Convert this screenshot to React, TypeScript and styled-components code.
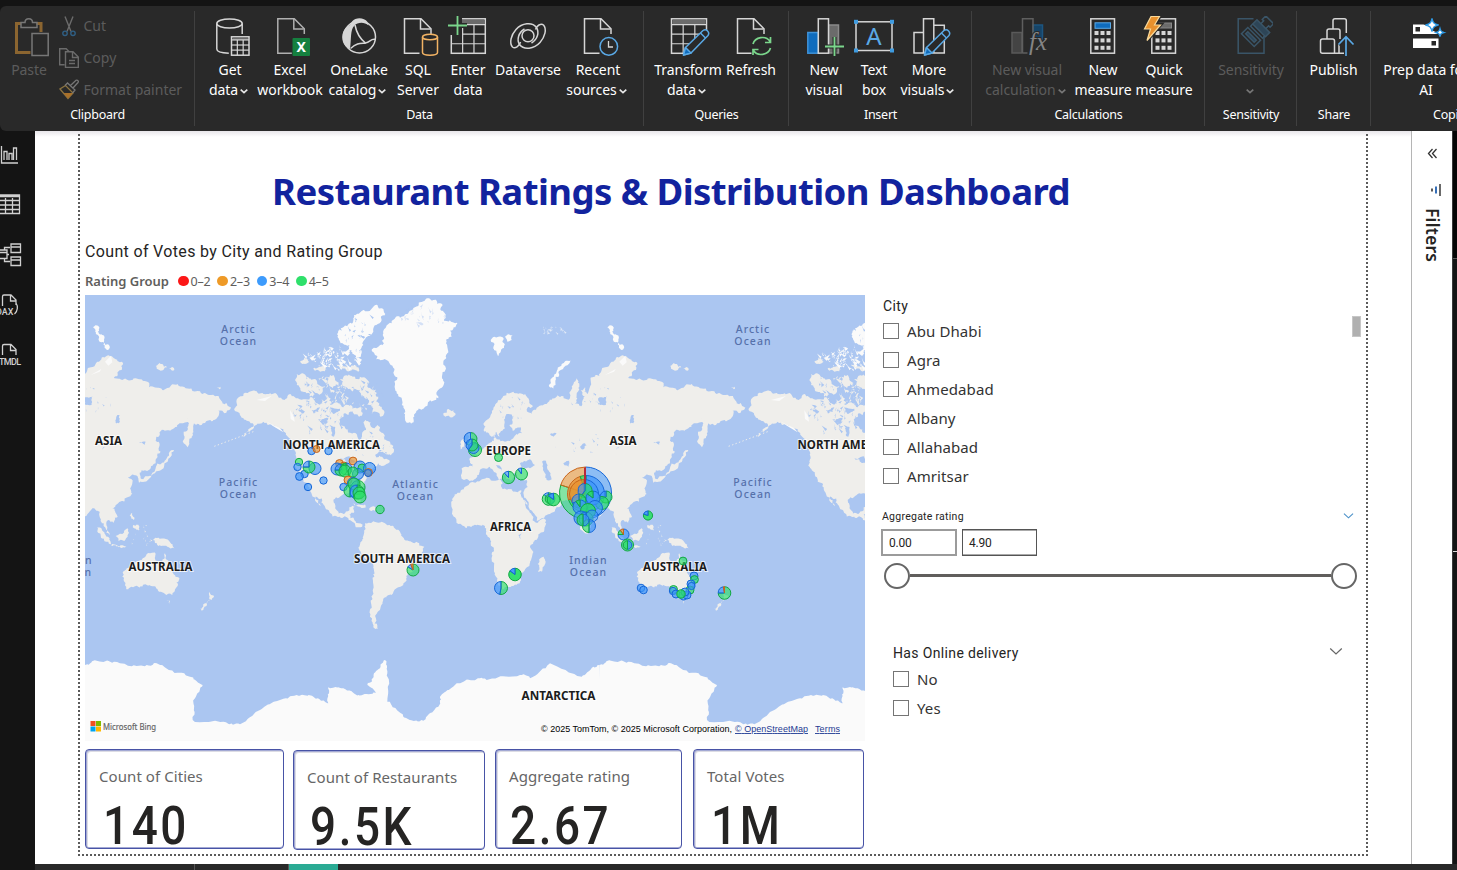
import React from "react";
import styled, { createGlobalStyle, css } from "styled-components";

const ui = `"Noto Sans", "Open Sans", sans-serif`;
const din = `Roboto, "Noto Sans", sans-serif`;

const GlobalStyle = createGlobalStyle`
  *, *::before, *::after { box-sizing: border-box; }
  body { margin: 0; font-family: ${ui}; background: #141414; overflow: hidden; }
  svg { display: block; flex: none; }
`;

/* ---------- shell ---------- */

const Page = styled.div`
  width: 1457px;
  height: 870px;
  display: flex;
  flex-direction: column;
  overflow: hidden;
  background: #141414;
`;

const Ribbon = styled.header`
  margin-top: 6px;
  height: 125px;
  flex: none;
  display: flex;
  background: #292929;
  border-radius: 6px 0 0 6px;
  color: #fff;
`;

const Group = styled.section<{ $w: number; $last?: boolean }>`
  width: ${(p) => p.$w}px;
  flex: none;
  display: flex;
  flex-direction: column;
  align-items: center;
  position: relative;
  ${(p) =>
    !p.$last &&
    css`
      &::after {
        content: "";
        position: absolute;
        right: 0;
        top: 5px;
        bottom: 5px;
        width: 1px;
        background: #404040;
      }
    `}
`;

const Items = styled.div<{ $pad?: number }>`
  height: 99px;
  width: 100%;
  display: flex;
  padding-left: ${(p) => p.$pad ?? 0}px;
`;

const Item = styled.div<{ $w: number; $dim?: boolean }>`
  width: ${(p) => p.$w}px;
  flex: none;
  padding-top: 10px;
  display: flex;
  flex-direction: column;
  align-items: center;
  font-size: 14px;
  line-height: 20px;
  letter-spacing: -0.05px;
  white-space: nowrap;
  color: ${(p) => (p.$dim ? "#5c5c5c" : "#fff")};
  svg.art { margin-bottom: 2px; }
`;

const Line = styled.span<{ $chev?: boolean }>`
  display: flex;
  align-items: center;
  gap: 2px;
  height: 20px;
  padding-right: ${(p) => (p.$chev ? 3 : 0)}px;
  svg { margin-top: 2px; }
`;

const GroupName = styled.div`
  font-size: 12.5px;
  line-height: 20px;
  letter-spacing: -0.25px;
  white-space: nowrap;
`;

const ClipList = styled.div`
  display: flex;
  flex-direction: column;
  padding: 4px 0 0 1px;
`;

const ClipRow = styled.div`
  height: 32.8px;
  display: flex;
  align-items: center;
  gap: 4.5px;
  font-size: 14px;
  color: #5c5c5c;
  white-space: nowrap;
`;

const Body = styled.div`
  height: 733px;
  flex: none;
  display: flex;
`;

const Nav = styled.nav`
  width: 35px;
  flex: none;
  background: #141414;
`;

const Canvas = styled.main`
  width: 1376px;
  flex: none;
  background: linear-gradient(#e8e6ea, #fff 6px);
  padding-left: 43px;
`;

const Board = styled.div`
  width: 1290px;
  height: 725px;
  padding: 38px 0 0 7px;
  background:
    repeating-linear-gradient(#5a5a5a 0 2px, transparent 2px 4px) 0 3px / 2px 100% no-repeat,
    repeating-linear-gradient(#5a5a5a 0 2px, transparent 2px 4px) 100% 3px / 2px 100% no-repeat,
    repeating-linear-gradient(90deg, #5a5a5a 0 2px, transparent 2px 4px) 0 100% / 100% 2px no-repeat;
`;

const Title = styled.h1`
  margin: 0 0 0 187px;
  font-size: 36.5px;
  line-height: 44px;
  font-weight: 700;
  color: #12239e;
  letter-spacing: -0.55px;
  white-space: nowrap;
`;

const Columns = styled.div`
  display: flex;
  gap: 16px;
  margin-top: 28px;
`;

const MapColumn = styled.div`
  width: 780px;
  flex: none;
`;

const VisualTitle = styled.div`
  font-family: ${din};
  font-size: 16px;
  line-height: 20px;
  padding-top: 1px;
  letter-spacing: 0.34px;
  color: #252423;
  white-space: nowrap;
`;

const Legend = styled.div`
  display: flex;
  align-items: center;
  height: 20px;
  margin: 9px 0 4px;
  font-size: 12.5px;
  color: #605e5c;
  white-space: nowrap;
`;

const LegendName = styled.b`
  width: 93px;
  font-size: 13px;
  font-weight: 600;
`;

const LegendItem = styled.span<{ $c: string }>`
  display: flex;
  align-items: center;
  gap: 2px;
  width: 39.4px;
  letter-spacing: -0.2px;
  &::before {
    content: "";
    width: 10.5px;
    height: 10.5px;
    border-radius: 50%;
    background: ${(p) => p.$c};
  }
`;

const Cards = styled.div`
  display: flex;
  align-items: flex-start;
  margin-top: 8px;
`;

const Card = styled.div<{ $w: number; $gap: number; $drop?: boolean }>`
  width: ${(p) => p.$w}px;
  height: 100px;
  flex: none;
  margin: ${(p) => (p.$drop ? 1 : 0)}px ${(p) => p.$gap}px 0 0;
  padding: 16px 0 0 13px;
  border: 1px solid #4853a6;
  box-shadow: inset 1px 1px #a3a9d4, inset 0 -1px #a3a9d4, inset 2px 2px #dcdce4;
  border-radius: 4px;
  overflow: hidden;
`;

const CardLabel = styled.div`
  font-size: 15px;
  line-height: 20px;
  letter-spacing: 0.07px;
  color: #666;
  white-space: nowrap;
`;

const CardValue = styled.div<{ $x?: number }>`
  font-family: ${din};
  font-size: 54px;
  font-weight: 500;
  line-height: 60px;
  letter-spacing: 3px;
  margin: 10px 0 0 ${(p) => p.$x ?? 0}px;
  color: #252423;
  white-space: nowrap;
  transform: scaleX(0.85);
  transform-origin: 0 0;
`;

const SlicerColumn = styled.div`
  width: 484px;
  flex: none;
  padding-top: 55px;
`;

const SlicerTitle = styled.div<{ $small?: boolean; $x?: number }>`
  display: flex;
  justify-content: space-between;
  align-items: center;
  padding-left: ${(p) => p.$x ?? 0}px;
  font-family: ${din};
  font-size: ${(p) => (p.$small ? 10.5 : 14)}px;
  line-height: 20px;
  letter-spacing: ${(p) => (p.$small ? 0.26 : 0.36)}px;
  color: #252423;
  svg { margin-top: -3px; }
`;

const CityList = styled.div`
  display: flex;
  justify-content: space-between;
  padding: 0 8px 0 2px;
`;

const Thumb = styled.div`
  width: 9px;
  height: 21px;
  margin-right: -4px;
  background: #b0b0b0;
  border: 1px solid #c6c6c6;
`;

const Check = styled.div`
  height: 29.1px;
  display: flex;
  align-items: center;
  gap: 8px;
  font-size: 15px;
  letter-spacing: 0.1px;
  color: #333;
  &::before {
    content: "";
    width: 16px;
    height: 16px;
    border: 1px solid #757575;
  }
`;

const RangeSlicer = styled.div`
  margin-top: 16px;
  width: 473px;
`;

const Inputs = styled.div`
  display: flex;
  gap: 5px;
  margin-top: 2px;
`;

const Input = styled.div<{ $soft?: boolean }>`
  width: ${(p) => (p.$soft ? 76 : 75)}px;
  height: 27px;
  padding-left: 6px;
  border: ${(p) => (p.$soft ? "2px solid #9b9b9b" : "1px solid #555")};
  box-shadow: ${(p) => (p.$soft ? "none" : "inset 0 1px #aaa, inset 0 -1px #aaa")};
  font-family: ${din};
  font-size: 12px;
  letter-spacing: -0.2px;
  line-height: ${(p) => (p.$soft ? 24 : 26)}px;
  color: #252423;
`;

const Track = styled.div`
  display: flex;
  align-items: center;
  margin: 7px 0 0 3px;
  width: 473px;
`;

const Knob = styled.div`
  width: 26px;
  height: 26px;
  border: 2px solid #666;
  border-radius: 50%;
  background: #fff;
`;

const Rail = styled.div`
  flex: 1;
  height: 3px;
  background: #605e5c;
`;

const DeliverySlicer = styled.div`
  margin: 54px 0 0 12px;
  width: 450px;
`;

const Options = styled.div`
  padding-top: 1.5px;
`;

const Filters = styled.aside`
  width: 41px;
  flex: none;
  background: #fff;
  border-left: 1px solid #b5b5b5;
  display: flex;
  flex-direction: column;
  align-items: center;
`;

const FiltersLabel = styled.div`
  writing-mode: vertical-rl;
  font-size: 17.5px;
  line-height: 22px;
  letter-spacing: 0.15px;
  font-weight: 600;
  color: #252423;
  margin: 10px 0 0 2px;
`;

const Edge = styled.div`
  flex: 1;
  background: #141414;
  border-left: 1px solid #3a3a3a;
  display: flex;
  flex-direction: column;
  &::before { content: ""; height: 128px; border-bottom: 1px solid #555; background: #050505; }
  &::after { content: ""; height: 293px; border-bottom: 1px solid #ddd; }
`;

const Tabs = styled.footer`
  flex: 1;
  margin-left: 35px;
  display: flex;
  background: #292929;
`;

const Tab = styled.div<{ $w: number; $active?: boolean }>`
  width: ${(p) => p.$w}px;
  background: ${(p) => (p.$active ? "#2aab94" : "#292929")};
  border-right: ${(p) => (p.$active ? "none" : "1px solid #555")};
`;

/* ---------- ribbon artwork ---------- */

const Chevron = ({ c = "#e8e8e8", w = 8, sw = 1.6 }: { c?: string; w?: number; sw?: number }) => (
  <svg width={w} height={w} viewBox="0 0 8 8" fill="none" stroke={c} strokeWidth={sw}>
    <path d="M.7 2.6 4 5.7 7.3 2.6" />
  </svg>
);

/* Each drawing is placed on the shared ribbon grid, centred on column `cx`. */
const Art = ({ cx, children }: { cx: number; children: React.ReactNode }) => (
  <svg
    className="art"
    width="44"
    height="42"
    viewBox={`${cx - 22} 16 44 42`}
    fill="none"
    stroke="#d6d6d6"
    strokeWidth="1.5"
  >
    {children}
  </svg>
);

const Sheet = ({ x, cut = 15 }: { x: number; cut?: number }) => (
  <g>
    <path d={`M${x + cut} 53.2H${x}V18.8h16.5l10 10V${cut > 16 ? 36 : 34}`} />
    <path d={`M${x + 16} 19v10h10`} />
  </g>
);

const Grid = ({ x, w, y = 18.8, h = 34.5, rows = 3 }: any) => (
  <g strokeWidth="1.2">
    <rect x={x} y={y} width={w} height={h} strokeWidth="1.5" />
    <rect x={x + 1} y={y + 1} width={w - 2} height={h * 0.13} fill="#6b6b6b" stroke="none" />
    {Array.from({ length: rows }, (_, i) => (
      <path key={i} d={`M${x} ${y + h * 0.17 + (i * h * 0.83) / rows}h${w}`} />
    ))}
    <path d={`M${x + w / 3} ${y + h * 0.17}v${h * 0.83}M${x + (2 * w) / 3} ${y + h * 0.17}v${h * 0.83}`} />
  </g>
);

const Pencil = ({ x, y }: { x: number; y: number }) => (
  <g transform={`translate(${x} ${y})`} stroke="#5aa9e6" strokeWidth="1.5" strokeLinejoin="round">
    <path d="M0 0 2-7.500 19.500-24.500a3.600 3.600 0 0 1 5 5L7.500-2Z" fill="#292929" />
    <path d="M0 0 2-7.500 7.500-2Z" fill="#0f6cbd" />
    <path d="m17-22 5 5" />
  </g>
);

const PasteArt = () => (
  <Art cx={29}>
    <path d="M21 23.500h-4.500V52.500h14M36.500 23.500h4.500V32" stroke="#8b6530" strokeWidth="3" />
    <path d="M21 27.500v-5h4c0-5 7.500-5 7.500 0H37v5Z" stroke="#777" />
    <rect x="32" y="33.500" width="16.200" height="22" stroke="#777" fill="#292929" />
  </Art>
);

const GetDataArt = () => (
  <Art cx={230}>
    <ellipse cx="229.500" cy="23.500" rx="12.700" ry="4.500" />
    <path d="M216.800 23.500V49c0 2.500 5 4 12 4.200M242.200 23.500V34" />
    <g fill="#292929"><Grid x={231.5} w={17.5} y={36.8} h={18.4} /></g>
  </Art>
);

const ExcelArt = () => (
  <Art cx={290}>
    <g stroke="#b0b0b0"><Sheet x={277.800} cut={14} /></g>
    <rect x="292.500" y="38" width="17.500" height="18" rx="1" fill="#15803f" stroke="none" />
    <text x="301.200" y="52.300" textAnchor="middle" fontFamily={ui} fontWeight="700" fontSize="14" fill="#fff" stroke="none">X</text>
  </Art>
);

const OneLakeArt = () => (
  <Art cx={359}>
    <circle cx="359.500" cy="37" r="16" />
    <path d="M343 42c-2-7 0-13.500 7-17l2-3.500c4-4.500 12-4 15.500.5l1 3.500c-4-4-11-3.500-14 0-4.500 4.500-3 13-4.500 23.500-4-2-6-4-7-7Z" fill="#d6d6d6" stroke="none" />
    <path d="M355 25c1.500 8 5 14 11 18.500M350.500 48.500c7-6 10-5 15-5.500 5-1 5-4.500 10-3.500" />
  </Art>
);

const SqlArt = () => (
  <Art cx={418}>
    <Sheet x={404.5} cut={15} />
    <g stroke="#f2b364">
      <ellipse cx="430" cy="37" rx="7.500" ry="2.800" />
      <path d="M422.500 37v15.500c0 3.500 15 3.500 15 0V37" />
    </g>
  </Art>
);

const EnterArt = () => (
  <Art cx={468}>
    <Grid x={451.3} w={34} />
    <path d="M447 15h15v20h-15z" fill="#292929" stroke="none" />
    <path d="M448 25.500h19M457.500 16v19" stroke="#292929" strokeWidth="5" />
    <path d="M448 25.500h19M457.500 16v19" stroke="#7bd68c" strokeWidth="1.800" />
  </Art>
);

const DataverseArt = () => (
  <Art cx={528}>
    <circle cx="528" cy="35.800" r="6" />
    <path d="M535.500 29.500c1-4 5.500-6.500 8-4.500 3.500 4 1.500 12-3.500 17.500-6 6.500-16 8-20.500 2-3-5-1-12 5-15.500" />
    <path d="M520.500 42c-1 4.500-5.500 7-8 5-3.500-4-1.500-12 3.500-17.500 6-6.500 16-8 20.500-2 3 5 1 12-5 15.500" />
  </Art>
);

const RecentArt = () => (
  <Art cx={598}>
    <Sheet x={584.5} cut={15} />
    <circle cx="608.800" cy="46.400" r="8.800" stroke="#5aa9e6" fill="#292929" />
    <path d="M608.500 41v6h4.500" strokeWidth="1.300" />
  </Art>
);

const TransformArt = () => (
  <Art cx={688}>
    <Grid x={671.5} w={35} />
    <path d="m683 55 27-27v27Z" fill="#292929" stroke="none" />
    <Pencil x={683.5} y={55} />
  </Art>
);

const RefreshArt = () => (
  <Art cx={751}>
    <Sheet x={737.5} cut={14} />
    <g stroke="#7bd68c" strokeWidth="1.700">
      <path d="M753 44c2-7 13-9 17-2.500M770.500 37v5.500H765M770.500 48c-2 7-13 9-17 2.500M753 55v-5.500h5.500" />
    </g>
  </Art>
);

const NewVisualArt = () => (
  <Art cx={824}>
    <rect x="828.500" y="25" width="10" height="28" fill="#6b6b6b" stroke="#8a8a8a" />
    <rect x="807.800" y="32.500" width="10.500" height="20.700" fill="#0f6cbd" stroke="#3f92d8" />
    <rect x="818.300" y="18.800" width="10.200" height="34.400" fill="#292929" />
    <path d="M825 46.500h19M834.500 37v19" stroke="#292929" strokeWidth="4" />
    <path d="M825 46.500h19M834.500 37v19" stroke="#7bd68c" strokeWidth="1.800" />
  </Art>
);

const TextBoxArt = () => (
  <Art cx={874}>
    <rect x="856" y="21.800" width="36" height="28.700" />
    <g fill="#3f9be0" stroke="none">
      {[[854, 19.8], [890, 19.8], [854, 48.5], [890, 48.5]].map(([x, y]) => (
        <rect key={`${x}-${y}`} x={x} y={y} width="4" height="4" />
      ))}
    </g>
    <text x="874" y="44.800" textAnchor="middle" fontFamily={ui} fontSize="24" fill="#5aa9e6" stroke="none">A</text>
  </Art>
);

const MoreVisualsArt = () => (
  <Art cx={929}>
    <path d="M934 25.300h10.300V53H914V32.500h9.500M923.500 53V18.800h10.300V53" />
    <Pencil x={924.5} y={55} />
  </Art>
);

const VisualCalcArt = () => (
  <Art cx={1027}>
    <rect x="1012" y="32.500" width="10" height="20.500" fill="#444" stroke="#5a5a5a" />
    <rect x="1033" y="25" width="9.500" height="14" fill="#164467" stroke="#1d5580" />
    <path d="M1022.500 53V18.800H1033V36M1022.500 53h5" stroke="#5f5f5f" />
    <text x="1029" y="50" fontFamily={`"Liberation Serif", serif`} fontStyle="italic" fontSize="25" fill="#858585" stroke="#292929" strokeWidth="2" paintOrder="stroke">fx</text>
  </Art>
);

const Keys = ({ x }: { x: number }) => (
  <g fill="#d6d6d6" stroke="none">
    {[0, 1, 2].flatMap((r) =>
      [0, 1, 2].map((c) => <rect key={`${r}${c}`} x={x + c * 6} y={31 + r * 7.400} width="4" height="4" />)
    )}
  </g>
);

const MeasureArt = () => (
  <Art cx={1103}>
    <rect x="1090.800" y="18.800" width="23.700" height="34.400" />
    <rect x="1095" y="22.800" width="15.500" height="5.500" fill="#0f6cbd" stroke="#5aa9e6" strokeWidth="1" />
    <Keys x={1094.5} />
  </Art>
);

const QuickArt = () => (
  <Art cx={1164}>
    <rect x="1151.800" y="18.800" width="23.700" height="34.400" />
    <rect x="1159" y="23" width="12.500" height="5" fill="#6b6b6b" stroke="#888" strokeWidth="1" />
    <Keys x={1155.500} />
    <path d="m1151 15.500h9.500l-5 8.500h6L1146 42l3.500-12.500h-6Z" fill="#e8912d" stroke="#292929" strokeWidth="3" />
    <path d="M1151 16.500h8.500l-5 8.500h6L1147 40.500l3.500-11.500h-6Z" fill="#e8912d" stroke="#f9d99a" strokeWidth="1.200" />
  </Art>
);

const SensitivityArt = () => (
  <Art cx={1250.500}>
    <g stroke="#3a5568">
      <path d="M1253 18.800h-15.300V53.200h25.800V36" />
      <g transform="translate(1260 29) rotate(45)">
        <rect x="-9" y="-4" width="18" height="6" fill="#2d4557" />
        <path d="M-3.500-4v-4h-2v-5h11v5h-2v4" />
        <path d="M-9 2v3h17V2" />
      </g>
      <g transform="translate(1250.500 37) rotate(45)">
        <rect x="-9" y="-4.500" width="18" height="9" />
        <rect x="-6" y="-1.500" width="12" height="3" fill="#2d4557" />
      </g>
    </g>
  </Art>
);

const PublishArt = () => (
  <Art cx={1333}>
    <path d="M1332 28.500v-7.700a2 2 0 0 1 2-2h9.300a2 2 0 0 1 2 2V33M1326 39v-8a2 2 0 0 1 2-2h9a2 2 0 0 1 2 2v8M1338 53.200h-16.500a2 2 0 0 1-2-2V41a2 2 0 0 1 2-2h10a2 2 0 0 1 2 2v12M1338 43v10.200h6" />
    <path d="M1345 56V37M1337.500 44.500l7.500-7.800 7.500 7.800" stroke="#292929" strokeWidth="4" />
    <path d="M1345 56V37M1337.500 44.500l7.500-7.800 7.500 7.800" stroke="#5aa9e6" strokeWidth="1.700" />
  </Art>
);

const PrepArt = () => (
  <Art cx={1426}>
    <g stroke="none" fill="#fff">
      <rect x="1413" y="24.500" width="25.500" height="9.500" />
      <rect x="1413" y="38.500" width="25.500" height="9.500" />
      <path d="M1415.500 27h4.500v4.500h-4.500zM1431.500 41h4.500v4.500h-4.500z" fill="#292929" />
      <path d="M1432 16.500c1.500 6 2.500 7 8.500 8.500 4 .5 6 5 3.500 8-3 4-6 2-8-1-3-1-5-2-6-5-2-1.500-5-1.500-6.500-2.500 6-1.500 7-2.500 8.500-8Z" fill="#292929" />
      <path d="M1432 18.500c1 4.500 2 5.500 6.500 6.500-4.500 1-5.500 2-6.500 6.500-1-4.500-2-5.500-6.500-6.500 4.500-1 5.500-2 6.500-6.500ZM1440 28.500c.7 2.700 1.200 3.200 4 4-2.800.7-3.300 1.200-4 4-.7-2.800-1.200-3.300-4-4 2.800-.8 3.300-1.300 4-4Z" stroke="#2c9be8" strokeWidth="1.300" />
    </g>
  </Art>
);

const CutArt = () => (
  <svg width="20" height="22" viewBox="59 15 20 22" fill="none" stroke="#6b6b6b" strokeWidth="1.400">
    <path d="m65 16.500 6 15M73 16.500l-6 15" />
    <circle cx="65" cy="33.300" r="2.200" stroke="#2f5f84" />
    <circle cx="73" cy="33.300" r="2.200" stroke="#2f5f84" />
  </svg>
);

const CopyArt = () => (
  <svg width="20" height="22" viewBox="59 47 20 22" fill="none" stroke="#6b6b6b" strokeWidth="1.400">
    <path d="M64.500 64.800h-4.800V48.700h6.500l3 3M65.500 51.800h7.500l5.300 5.300v10.300H65.500ZM72.500 52v5.500H78M69 60.500h6M69 63.500h6" />
  </svg>
);

const PainterArt = () => (
  <svg width="20" height="22" viewBox="59 79 20 22" fill="none" stroke="#777" strokeWidth="1.300">
    <path d="m60 90 8 9.500 5-5.500-7.500-7.500Z" stroke="#8b7340" />
    <path d="m63.500 94 4.500 5.500 5-5.500Z" fill="#a8702a" stroke="none" />
    <path d="m65 86.500 2.500-2.500 7.500 7-2.500 3M70.500 86.500l5.500-5.200c1.500-.8 3 .8 2 2.200l-5 5.500" />
  </svg>
);

/* ---------- side navigation ---------- */

const NavArt = () => (
  <svg width="35" height="733" viewBox="0 131 35 733" fill="none" stroke="#d0d0d0" strokeWidth="1.300">
    <path d="M1.500 146v17H18M4 160v-8.500h3V160M9 160v-6.500h3V160M13.500 160v-12h3V160" />
    <path d="M-1 195h20.500v18.500H-1M-1 196.500h20M-1 200.500h20M-1 205h20M-1 209.500h20M5.500 198v15M12.500 198v15" />
    <path d="M11 244h9.500v8.500H11ZM11 257h9.500v8.500H11ZM11 247h9.500M11 260h9.500M-1 250h8v8.500h-8M-1 252.500h8M7 254.500h2M10 247.500H4.500v2.500M4.500 258.500v3H10" />
    <path d="M2.500 306v-9.500a1.500 1.500 0 0 1 1.500-1.500h7l5 5v5M10.500 295.500v5.500h5.500M16 303c2 3 2 8-1.500 11" />
    <path d="M2.500 355v-9a1.500 1.500 0 0 1 1.500-1.500h7l5 5v5.500M10.500 345v5.500h5.500" />
    <g fontFamily={din} fontSize="9" fontWeight="500" fill="#d0d0d0" stroke="none">
      <text x="-4" y="314.500">DAX</text>
      <text x="-1" y="364.500" textLength="22">TMDL</text>
    </g>
  </svg>
);

/* ---------- map ---------- */

type Pt = [number, number];

const random = (start: number) => {
  let seed = start;
  return () => {
    seed = (seed * 16807) % 2147483647;
    return seed / 2147483647;
  };
};

/* Adds repeatable jitter between outline points so coasts look ragged. */
const rough = (flat: string, amp = 5): string => {
  const n = flat.trim().split(/[\s,]+/).map(Number);
  let pts: Pt[] = [];
  for (let i = 0; i < n.length; i += 2) pts.push([n[i], n[i + 1]]);
  const rnd = random(Math.abs(Math.round(n[0] * 31 + n[1] * 17)) + 7);
  for (let pass = 0; pass < 3; pass++) {
    const out: Pt[] = [];
    pts.forEach((a, i) => {
      const b = pts[(i + 1) % pts.length];
      out.push(a);
      const d = Math.hypot(b[0] - a[0], b[1] - a[1]);
      if (d > 7 && d < 400) {
        const k = Math.min(amp, d * 0.3) * 2;
        out.push([
          (a[0] + b[0]) / 2 + (rnd() - 0.5) * k,
          (a[1] + b[1]) / 2 + (rnd() - 0.5) * k,
        ]);
      }
    });
    pts = out;
  }
  return "M" + pts.map((p) => `${p[0].toFixed(1)} ${p[1].toFixed(1)}`).join("L") + "Z";
};

/* Scatters small slanted fragments (islets, inlets, lakes) over an ellipse. */
const scatter = (cx: number, cy: number, rx: number, ry: number, count: number, size: number): string => {
  const rnd = random(Math.round(cx * 13 + cy * 7 + count));
  let d = "";
  for (let i = 0; i < count; i++) {
    const a = rnd() * Math.PI * 2;
    const q = Math.sqrt(rnd());
    const x = cx + Math.cos(a) * q * rx;
    const y = cy + Math.sin(a) * q * ry;
    const s = size * (0.4 + rnd());
    const t = rnd() * 3;
    d += `M${x.toFixed(1)} ${y.toFixed(1)}l${(s * Math.cos(t)).toFixed(1)} ${(s * Math.sin(t)).toFixed(1)} ${(s * 0.5).toFixed(1)} ${(s * 0.3).toFixed(1)} ${(-s * 0.4).toFixed(1)} ${(s * 0.5).toFixed(1)}Z`;
  }
  return d;
};

const west = [
  /* North America */
  "470,340 476,322 495,308 530,303 560,312 590,312 606,328 625,314 645,322 670,328 690,322 712,340 735,332 745,318 752,345 775,340 790,352 812,345 822,362 805,375 790,372 782,385 780,400 798,418 822,428 832,440 836,455 844,448 846,432 858,420 852,402 856,390 872,396 884,415 892,405 905,428 912,448 930,455 940,468 930,482 905,486 885,495 902,500 912,508 928,510 925,520 905,528 895,520 880,535 868,545 860,560 852,575 850,590 838,608 842,630 838,640 828,618 810,610 790,612 768,622 764,640 772,662 790,672 804,664 808,652 824,650 822,668 808,674 822,686 828,698 848,704 842,712 825,702 805,685 780,680 755,672 738,658 728,640 712,622 700,606 706,624 722,648 715,640 696,615 688,592 668,562 652,540 645,515 648,490 640,468 632,448 618,430 598,415 575,402 550,395 528,405 508,425 485,442 505,418 518,400 500,392 482,378 466,364",
  /* Victoria and western Arctic */
  "650,252 668,250 685,262 700,268 712,282 735,290 728,305 705,312 690,320 676,306 660,298 650,285",
  "660,215 672,202 688,215 675,222 664,220",
  "700,235 722,230 740,238 725,244 705,242",
  "770,222 800,230 835,232 838,242 800,242 780,236",
  "742,260 760,255 768,275 758,295 746,282",
  "722,330 745,325 756,335 742,343 726,340",
  /* Baffin */
  "790,262 815,258 835,268 852,262 868,278 862,290 885,305 895,320 888,335 905,350 912,372 902,380 888,365 875,372 880,355 862,345 868,330 850,322 840,300 820,290 800,292 786,278",
  "820,355 838,352 848,368 835,378 820,370",
  /* Newfoundland */
  "905,478 925,465 942,478 935,492 915,490",
  /* Iceland */
  "1090,370 1102,358 1120,360 1126,370 1110,382 1096,380",
  /* Caribbean */
  "820,640 845,645 862,652 840,650",
  "868,655 890,656 885,662 868,660",
];

const westIce = [
  "875,180 895,170 910,160 908,135 918,112 935,100 948,80 972,78 990,62 1015,48 1025,36 1060,30 1088,45 1084,62 1096,78 1092,92 1130,98 1126,112 1110,122 1115,140 1098,160 1102,190 1090,215 1096,240 1086,265 1088,290 1070,315 1075,325 1050,330 1035,350 1010,362 1000,385 994,402 980,398 972,370 965,345 950,310 945,285 952,262 940,248 930,222 905,210 885,195",
  "800,108 818,95 822,75 850,60 880,50 905,55 916,72 905,90 885,105 880,125 862,140 850,165 845,188 828,205 815,180 800,195 808,165 782,160 772,140 788,132 782,115",
  "778,118 795,130 790,150 775,138",
];

const east = [
  /* Eurasia */
  "-25,535 -5,532 10,530 0,518 -2,508 22,492 30,478 48,470 58,460 72,452 72,430 80,448 105,455 125,448 140,432 155,430 152,412 128,422 118,405 128,380 115,372 104,395 100,418 88,440 78,425 62,438 44,425 40,402 62,375 75,345 100,318 130,305 158,312 178,332 188,350 170,358 185,372 205,350 230,342 248,325 275,318 300,325 305,290 318,265 328,290 322,325 310,345 335,348 345,320 332,300 345,292 352,312 362,270 388,258 395,240 430,215 458,196 480,208 498,215 498,240 475,262 500,270 540,265 575,275 580,292 620,300 650,283 690,295 740,312 782,318 800,340 826,352 812,368 788,362 780,388 755,392 738,405 715,400 712,435 696,472 684,460 684,425 700,400 680,400 650,418 625,420 602,440 600,452 612,465 615,485 600,520 572,542 552,548 562,572 550,578 540,556 525,558 516,562 530,580 530,612 505,636 480,645 470,655 486,680 475,698 458,690 452,702 462,735 452,728 444,700 432,668 410,655 392,678 365,700 356,728 345,730 325,690 312,650 296,632 275,636 250,622 230,612 240,628 265,628 275,642 255,662 215,685 200,692 188,665 172,632 160,608 172,592 170,570 140,568 132,548 120,572 108,565 95,535 78,525 100,560 88,570 78,548 60,530 42,535 22,555 8,572 -25,566",
  /* Great Britain and Ireland */
  "-8,430 2,428 10,450 28,478 20,492 0,490 6,470 -5,455",
  "-28,455 -14,450 -12,472 -28,478",
  /* Africa */
  "20,575 60,566 92,570 95,592 130,605 155,602 164,630 185,675 198,698 228,690 226,708 205,740 180,770 186,800 178,828 155,850 150,875 130,888 98,898 84,885 75,850 65,808 72,780 60,745 48,722 45,708 20,706 -10,714 -35,702 -52,675 -56,645 -40,612 -15,590",
  /* Madagascar */
  "222,800 227,815 216,845 204,845 203,822",
  "600,228 620,222 634,232 615,242",
  "640,236 655,234 652,242",
  "783,292 794,290 792,298",
  /* Japan */
  "642,485 655,480 645,500 625,530 598,550 565,575 555,572 590,548 618,520 635,500",
  /* Maritime Southeast Asia */
  "425,712 440,722 462,745 466,762 452,755 435,735",
  "480,738 500,732 515,715 520,728 510,748 488,752",
  "462,765 490,768 512,770 490,772",
  "592,750 612,746 640,752 656,775 635,770 608,768",
  "522,675 532,668 535,690 526,685",
  "532,705 548,704 550,718 538,715",
  /* Australia */
  "502,845 530,825 558,810 572,795 600,792 606,815 622,818 628,790 638,812 648,838 668,862 666,888 650,915 632,915 610,905 600,890 580,885 545,888 512,898 506,875 500,860",
  "632,930 646,930 642,942",
  /* New Zealand */
  "762,905 775,918 768,930 760,925",
  "762,928 754,945 738,962 732,956 748,940",
];

const eastIce = [
  /* Novaya Zemlya */
  "305,208 288,212 265,232 248,262 238,290 252,300 256,272 272,240 296,222",
  /* Svalbard */
  "62,150 85,140 98,142 102,160 98,175 84,198 72,180",
  "105,140 128,136 125,150 112,155",
  /* Severnaya Zemlya */
  "412,112 428,108 430,130 420,132",
  "425,132 440,135 444,158 430,152",
  "446,158 460,165 460,178 448,175",
];

const south =
  "855,700 880,694 915,700 940,708 960,725 972,748 1010,755 1033,770 1025,790 1005,815 1000,840 978,858 970,885 945,898 935,915 915,922 908,940 900,960 886,980 884,1000 897,1018 880,1012 870,980 875,950 880,910 883,860 880,825 855,805 838,770 850,745";

const antarctica =
  "15,1125 50,1112 120,1120 200,1125 230,1120 280,1145 330,1160 368,1185 345,1225 338,1290 430,1295 480,1303 540,1260 600,1230 650,1215 700,1220 745,1240 745,1192 790,1195 835,1215 888,1208 862,1185 875,1168 882,1150 900,1135 912,1110 922,1150 922,1235 970,1280 990,1290 1030,1292 1075,1250 1080,1220 1130,1180 1200,1165 1220,1170 1320,1155 1350,1165 1410,1120 1505,1160 1540,1130 1558,1125";

const iceEdge = (() => {
  const body = rough(antarctica, 4).slice(1, -1);
  const upper = body.split("L").filter((p) => Number(p.split(" ")[0]) > -50);
  return "M" + upper.join("L") + "L1562 1360L10 1360Z";
})();

const lakes = [
  "385,325 410,318 408,345 390,345",
  "216,515 228,512 238,545 245,568 230,570 222,545",
  "150,520 180,508 195,525 180,535 155,532",
  "240,432 260,430 250,440",
  "482,380 492,375 490,400 480,398",
  "280,520 298,512 296,530",
  "330,470 345,460 350,466 335,478",
  "550,460 570,455 568,464",
  "145,735 155,730 152,748",
  "152,612 176,652 188,668 180,672 165,645",
];

const Land = () => (
  <g>
    <g fill="#efeeeb">
      {west.map((d) => <path key={d} d={rough(d, 6)} />)}
      <path d={rough(south, 4)} />
      <path d={scatter(745, 300, 60, 45, 40, 12)} />
      <path d={scatter(830, 310, 60, 45, 26, 12)} />
      <g transform="translate(1170 0)">
        {east.map((d) => <path key={d} d={rough(d, 5)} />)}
        <path d={scatter(560, 735, 40, 35, 16, 6)} />
      </g>
    </g>
    <g fill="#fafafa">
      {westIce.map((d) => <path key={d} d={rough(d, 9)} />)}
      <path d={iceEdge} />
      <path d={scatter(770, 200, 65, 40, 70, 12)} />
      <path d={scatter(690, 195, 30, 22, 12, 9)} />
      <path d="m530 330 45-12-20 15ZM630 360l12 20 2 15-12-8ZM560 395l40 20 10 12-30-18Z" />
      <g transform="translate(1170 0)">
        {eastIce.map((d) => <path key={d} d={rough(d, 5)} />)}
        <path d={scatter(250, 118, 42, 14, 26, 6)} opacity=".7" />
        <path d="m405 255 32-18-5 8ZM448 215l18-18 4 20-12 10Z" />
      </g>
    </g>
    <g fill="#abc6f1" transform="translate(1170 0)">
      {lakes.map((d) => <path key={d} d={rough(d, 3)} />)}
      <path d={scatter(130, 350, 45, 40, 18, 6)} />
      <path d={scatter(400, 330, 100, 40, 20, 5)} />
      <path d={scatter(340, 460, 120, 30, 14, 6)} />
    </g>
    <g fill="#abc6f1">
      <path d={rough("695,360 720,352 715,366 700,370", 4)} />
      <path d={rough("720,395 745,385 738,405", 4)} />
      <path d={rough("752,415 764,410 762,440 754,435", 4)} />
      <path d={rough("780,505 810,500 830,515 808,518", 4)} />
      <path d={rough("750,350 780,356 760,372", 4)} />
      <path d={scatter(720, 370, 80, 55, 60, 10)} />
      <path d={scatter(850, 120, 55, 60, 30, 10)} />
      <path d={scatter(860, 310, 45, 50, 26, 9)} />
      <path d={scatter(870, 460, 60, 40, 24, 6)} />
      <path d={scatter(690, 280, 40, 30, 14, 8)} />
      <path d={scatter(1030, 70, 75, 30, 26, 9)} opacity=".5" />
    </g>
    <g fill="none" stroke="#eeedea" strokeWidth="3" strokeDasharray="4 7">
      <path d="M520 425 400 470" />
      <path d="M320 385c8 0 12 6 10 12" />
    </g>
  </g>
);

const palette: Record<string, [string, string]> = {
  r: ["#e81123", "#b00010"],
  o: ["#e8912d", "#c8641a"],
  b: ["#3d96fb", "#1567d8"],
  g: ["#2bde68", "#12a843"],
};

/* Bubble: centre, radius and slices such as "b30 g70". */
const Bubble = ({ x, y, r, s, o = 0.65 }: { x: number; y: number; r: number; s: string; o?: number }) => {
  const slices = s.split(" ").map((t) => [t[0], Number(t.slice(1) || 100)] as [string, number]);
  if (slices.length === 1) {
    const [f, l] = palette[slices[0][0]];
    return <circle cx={x} cy={y} r={r} fill={f} fillOpacity={o} stroke={l} />;
  }
  let at = 0;
  const p = (v: number) => {
    const a = (v / 100) * Math.PI * 2 - Math.PI / 2;
    return `${(x + r * Math.cos(a)).toFixed(2)} ${(y + r * Math.sin(a)).toFixed(2)}`;
  };
  return (
    <g>
      {slices.map(([k, v], i) => {
        const a = at;
        at += v;
        return (
          <path
            key={i}
            d={`M${x} ${y}L${p(a)}A${r} ${r} 0 ${v > 50 ? 1 : 0} 1 ${p(at)}Z`}
            fill={palette[k][0]}
            fillOpacity={o}
            stroke={palette[k][1]}
            strokeLinejoin="round"
          />
        );
      })}
    </g>
  );
};

type B = [number, number, number, string, number?];

const bubbles: B[] = [
  [311.500, 451, 3.700, "b"], [316.500, 449, 3.500, "o"], [328.500, 451, 3.700, "b"],
  [299, 462, 3.700, "g"], [297.500, 467, 3.700, "b"], [304.500, 474, 3.700, "b"], [299.500, 476.500, 3.900, "b"],
  [315, 468.500, 6, "b"], [309, 467, 6, "g75 b25"], [308, 487, 3.700, "b"], [323.500, 480.500, 3.700, "b"],
  [339.500, 463.500, 3.900, "o"], [353, 461, 3.900, "o"], [344, 466, 4, "o"],
  [337, 469, 6, "b"], [346, 469, 6, "b40 g60"], [341, 470, 6, "g75 b25"], [345, 471, 6, "g"],
  [360, 467, 6, "b"], [362, 468, 4, "g"], [369.500, 468.500, 6, "b"], [368.500, 472.500, 3.900, "o"], [368, 473, 3.500, "b"],
  [358, 474, 5.500, "b"], [353, 472, 5, "g"], [348, 480, 4, "o"], [343.500, 487, 3.700, "b"],
  [353, 483, 5.500, "b"], [350, 491, 6, "b50 g50"], [358, 487.500, 7, "g65 b35"], [354, 484, 6, "g"],
  [357, 492, 7, "g60 b40"], [359, 493, 6, "g"], [360, 497, 6, "g"], [380, 509.500, 4.200, "g"],
  [413, 570, 6, "g84 b10 o6"],
  [470.500, 439, 6.500, "g60 b40"], [475, 450, 6.500, "g"], [473.500, 448, 5.500, "b"], [472, 445, 6, "g60 b40"],
  [498.500, 457.500, 4, "g"], [508.500, 477.500, 6.200, "g88 b12"], [521.500, 474, 6, "g90 b10"],
  [548.500, 499, 6.300, "g88 b12"], [550, 499, 4.800, "b50 g50"], [553.500, 499.500, 6.300, "g85 b15", 0.8],
  [585.500, 493, 26, "b50 g30 o20", 0.55], [586, 494, 18.500, "b50 g20 o25 g5", 0.7], [584, 494, 14.500, "b60 o40", 0.7],
  [606, 497, 6, "g70 b30"], [602, 503, 6.500, "g"], [585, 490.500, 7, "g60 b40"],
  [593, 498, 7, "b85 g15", 0.8], [579, 501, 7, "g70 b30"], [580, 507, 7, "b90 g10", 0.8],
  [595, 508, 7.500, "b"], [588, 511, 7.500, "g", 0.8], [581, 518, 7, "b"], [586, 519, 7, "g60 b40"],
  [592, 516, 6, "b"], [589, 526, 6.500, "b50 g50"], [583, 520, 6, "b50 g50"],
  [648, 515.500, 4.600, "g80 b20", 0.9], [623.500, 534.500, 5.500, "b75 g15 o10"], [627.500, 545, 6, "g"], [627.500, 545, 4.300, "b50 g50", 0.7],
  [515, 574.500, 6.300, "g85 b15", 0.95], [501, 588, 6.500, "g53 b47"],
  [683, 561, 3.900, "g"], [641, 588, 3.800, "b"], [643.500, 590, 3.800, "b"],
  [694, 576, 4, "b"], [694.500, 579.500, 3.900, "g"], [691, 584, 4, "b"], [690, 590, 4, "g"], [691.500, 586, 3.600, "b"],
  [673.500, 589.500, 4, "g"], [673, 591, 3.700, "b"], [676, 594, 4, "b"], [683.500, 595.500, 4.500, "b"], [687, 595, 4, "b"], [685, 592, 4, "b"], [681, 594, 4.200, "g", 0.8],
  [724.500, 593, 6.300, "g75 b22 o3"],
];

const seas: [number, number, string, string][] = [
  [238, 333, "Arctic", "Ocean"], [752.5, 333, "Arctic", "Ocean"],
  [238, 486, "Pacific", "Ocean"], [752.5, 486, "Pacific", "Ocean"],
  [415, 488, "Atlantic", "Ocean"], [588, 564, "Indian", "Ocean"], [73, 564, "Indian", "Ocean"],
];

const lands: [number, number, string, number][] = [
  [108.5, 444.5, "ASIA", 27], [331.5, 448.5, "NORTH AMERICA", 97], [508.5, 455, "EUROPE", 45],
  [623, 444.5, "ASIA", 27], [846, 448.5, "NORTH AMERICA", 97], [510.5, 531, "AFRICA", 41],
  [402, 563, "SOUTH AMERICA", 96], [160.5, 571, "AUSTRALIA", 64], [675, 571, "AUSTRALIA", 64], [558.5, 700, "ANTARCTICA", 74],
];

const WorldMap = () => (
  <svg width="780" height="446" viewBox="85 295 780 446">
    <rect x="85" y="295" width="780" height="446" fill="#abc6f1" />
    <defs>
      <g id="world"><Land /></g>
    </defs>
    <g transform="translate(80 290) scale(.33333)">
      <use href="#world" x="-1543" />
      <use href="#world" />
      <use href="#world" x="1543" />
    </g>
    <g fontFamily={ui} fontSize="10.500" fontWeight="500" fill="#5671ab" textAnchor="middle" letterSpacing="1.050">
      {seas.map(([x, y, a, b], i) => (
        <g key={i}>
          <text x={x + 0.5} y={y}>{a}</text>
          <text x={x + 0.5} y={y + 12}>{b}</text>
        </g>
      ))}
    </g>
    <g fontFamily={ui} fontSize="12" fontWeight="700" fill="#1c1c1c" textAnchor="middle" stroke="#fff" strokeOpacity=".7" strokeWidth="2" paintOrder="stroke">
      {lands.map(([x, y, t, w], i) => (
        <text key={i} x={x} y={y} textLength={w} lengthAdjust="spacingAndGlyphs">{t}</text>
      ))}
    </g>
    <g strokeWidth="1">
      {bubbles.map(([x, y, r, s, o], i) => <Bubble key={i} x={x} y={y} r={r} s={s} o={o} />)}
      <path d="M585 467.500V484" stroke="#b8283c" strokeWidth="2" />
    </g>
    <path d="M90.500 721h5v5h-5z" fill="#f25022" />
    <path d="M96 721h5v5h-5z" fill="#7fba00" />
    <path d="M90.500 726.500h5v5h-5z" fill="#00a4ef" />
    <path d="M96 726.500h5v5h-5z" fill="#ffb900" />
    <text x="103" y="730" fontFamily={ui} fontSize="9" fill="#666" stroke="#666" strokeWidth=".2" textLength="53" lengthAdjust="spacingAndGlyphs">Microsoft Bing</text>
    <g fontFamily={`"Liberation Sans", Arial, sans-serif`} fontSize="9" fill="#000">
      <text x="541" y="732" textLength="191">© 2025 TomTom, © 2025 Microsoft Corporation,</text>
      <g fill="#1f3a93" textDecoration="underline">
        <text x="735" y="732" textLength="73">© OpenStreetMap</text>
        <text x="815" y="732" textLength="25">Terms</text>
      </g>
    </g>
  </svg>
);

/* ---------- page ---------- */

type Cmd = { art: React.ReactNode; w: number; a: string; b?: string; chev?: boolean; dim?: boolean };

const Command = ({ art, w, a, b, chev, dim }: Cmd) => (
  <Item $w={w} $dim={dim}>
    {art}
    <Line>{a}</Line>
    <Line $chev={chev}>
      {b}
      {chev && <Chevron c={dim ? "#777" : "#e8e8e8"} />}
    </Line>
  </Item>
);

const groups: { name: string; w: number; pad: number; last?: boolean; items: Cmd[] }[] = [
  {
    name: "Data", w: 449, pad: 5, items: [
      { art: <GetDataArt />, w: 60, a: "Get", b: "data", chev: true },
      { art: <ExcelArt />, w: 60, a: "Excel", b: "workbook" },
      { art: <OneLakeArt />, w: 78, a: "OneLake", b: "catalog", chev: true },
      { art: <SqlArt />, w: 40, a: "SQL", b: "Server" },
      { art: <EnterArt />, w: 60, a: "Enter", b: "data" },
      { art: <DataverseArt />, w: 60, a: "Dataverse" },
      { art: <RecentArt />, w: 80, a: "Recent", b: "sources", chev: true },
    ],
  },
  {
    name: "Queries", w: 145, pad: 4, items: [
      { art: <TransformArt />, w: 80, a: "Transform", b: "data", chev: true },
      { art: <RefreshArt />, w: 46, a: "Refresh" },
    ],
  },
  {
    name: "Insert", w: 183, pad: 10, items: [
      { art: <NewVisualArt />, w: 50, a: "New", b: "visual" },
      { art: <TextBoxArt />, w: 50, a: "Text", b: "box" },
      { art: <MoreVisualsArt />, w: 60, a: "More", b: "visuals", chev: true },
    ],
  },
  {
    name: "Calculations", w: 233, pad: 10, items: [
      { art: <VisualCalcArt />, w: 90, a: "New visual", b: "calculation", chev: true, dim: true },
      { art: <MeasureArt />, w: 62, a: "New", b: "measure" },
      { art: <QuickArt />, w: 60, a: "Quick", b: "measure" },
    ],
  },
  { name: "Sensitivity", w: 92, pad: 0, items: [{ art: <SensitivityArt />, w: 92, a: "Sensitivity", chev: true, dim: true }] },
  { name: "Share", w: 74, pad: 0, items: [{ art: <PublishArt />, w: 73, a: "Publish" }] },
  { name: "Copilot", w: 164, pad: 0, last: true, items: [{ art: <PrepArt />, w: 110, a: "Prep data for", b: "AI" }] },
];

const cities = ["Abu Dhabi", "Agra", "Ahmedabad", "Albany", "Allahabad", "Amritsar"];

export default function App() {
  return (
    <Page>
      <GlobalStyle />
      <Ribbon>
        <Group $w={195}>
          <Items>
            <Item $w={58} $dim>
              <PasteArt />
              <Line>Paste</Line>
            </Item>
            <ClipList>
              <ClipRow><CutArt />Cut</ClipRow>
              <ClipRow><CopyArt />Copy</ClipRow>
              <ClipRow><PainterArt />Format painter</ClipRow>
            </ClipList>
          </Items>
          <GroupName>Clipboard</GroupName>
        </Group>
        {groups.map((g) => (
          <Group key={g.name} $w={g.w} $last={g.last}>
            <Items $pad={g.pad}>
              {g.items.map((it, i) => <Command key={i} {...it} />)}
            </Items>
            <GroupName>{g.name}</GroupName>
          </Group>
        ))}
      </Ribbon>
      <Body>
        <Nav><NavArt /></Nav>
        <Canvas>
          <Board>
            <Title>Restaurant Ratings &amp; Distribution Dashboard</Title>
            <Columns>
              <MapColumn>
                <VisualTitle>Count of Votes by City and Rating Group</VisualTitle>
                <Legend>
                  <LegendName>Rating Group</LegendName>
                  <LegendItem $c="#fc1717">0–2</LegendItem>
                  <LegendItem $c="#ee9a27">2–3</LegendItem>
                  <LegendItem $c="#3d9bfc">3–4</LegendItem>
                  <LegendItem $c="#2fe06b">4–5</LegendItem>
                </Legend>
                <WorldMap />
                <Cards>
                  <Card $w={199} $gap={9}>
                    <CardLabel>Count of Cities</CardLabel>
                    <CardValue $x={4}>140</CardValue>
                  </Card>
                  <Card $w={192} $gap={10} $drop>
                    <CardLabel>Count of Restaurants</CardLabel>
                    <CardValue $x={3}>9.5K</CardValue>
                  </Card>
                  <Card $w={187} $gap={11}>
                    <CardLabel>Aggregate rating</CardLabel>
                    <CardValue $x={1}>2.67</CardValue>
                  </Card>
                  <Card $w={171} $gap={0}>
                    <CardLabel>Total Votes</CardLabel>
                    <CardValue $x={4}>1M</CardValue>
                  </Card>
                </Cards>
              </MapColumn>
              <SlicerColumn>
                <SlicerTitle $x={2}>City</SlicerTitle>
                <CityList>
                  <div>{cities.map((c) => <Check key={c}>{c}</Check>)}</div>
                  <Thumb />
                </CityList>
                <RangeSlicer>
                  <SlicerTitle $small $x={1}>Aggregate rating<Chevron c="#4a90c8" w={11} sw={0.8} /></SlicerTitle>
                  <Inputs>
                    <Input $soft>0.00</Input>
                    <Input>4.90</Input>
                  </Inputs>
                  <Track><Knob /><Rail /><Knob /></Track>
                </RangeSlicer>
                <DeliverySlicer>
                  <SlicerTitle>Has Online delivery<Chevron c="#666" w={14} sw={0.7} /></SlicerTitle>
                  <Options>
                    <Check>No</Check>
                    <Check>Yes</Check>
                  </Options>
                </DeliverySlicer>
              </SlicerColumn>
            </Columns>
          </Board>
        </Canvas>
        <Filters>
          <svg width="40" height="67" viewBox="1412 131 40 67" fill="none" stroke="#333" strokeWidth="1.300">
            <path d="m1432.500 149-4 4.500 4 4.500M1436.500 149l-4 4.500 4 4.500" />
            <path d="M1440 184v12" stroke="#444" strokeWidth="1.600" />
            <path d="M1436 186.500v7" stroke="#1f5fb0" strokeWidth="1.800" />
            <path d="M1432 188.500v3" stroke="#333" strokeWidth="1.600" />
          </svg>
          <FiltersLabel>Filters</FiltersLabel>
        </Filters>
        <Edge />
      </Body>
      <Tabs>
        <Tab $w={160} />
        <Tab $w={94} />
        <Tab $w={49} $active />
      </Tabs>
    </Page>
  );
}
